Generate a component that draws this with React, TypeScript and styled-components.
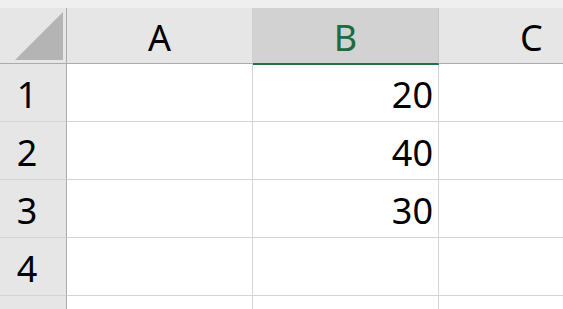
import React from 'react';
import styled, { createGlobalStyle } from 'styled-components';

const GlobalStyle = createGlobalStyle`
  html, body {
    margin: 0;
    padding: 0;
    background: #ffffff;
    overflow: hidden;
  }
  body {
    font-family: "Noto Sans", "Open Sans", sans-serif;
  }
`

const SSheet = styled.div`
  width: 563px;
  height: 309px;
  overflow: hidden;
  padding-top: 8px;
  box-sizing: border-box;
  background: #efefef;
`

const SGrid = styled.div`
  display: grid;
  grid-template-columns: 67px 186px 186px 186px;
  grid-template-rows: 56px repeat(5, 58px);
  background: #ffffff;
`

const SCorner = styled.div`
  background: #e6e6e6;
  border-right: 1px solid #ababab;
  border-bottom: 1px solid #ababab;
  display: flex;
  align-items: flex-end;
  justify-content: flex-end;
  padding: 0 3px 3px 0;
`

const SColHeader = styled.div`
  display: flex;
  align-items: center;
  justify-content: center;
  font-size: 36px;
  line-height: 1;
  padding-top: 4px;
  background: ${({ selected }) => selected ? '#d2d2d2' : '#e6e6e6'};
  color: ${({ selected }) => selected ? '#1e6b41' : '#000000'};
  border-right: 1px solid ${({ selected }) => selected ? '#c6c6c6' : '#d0d0d0'};
  border-bottom: 1px solid ${({ selected }) => selected ? '#217346' : '#ababab'};
  box-shadow: ${({ selected }) => selected ? '0 1px 0 #217346' : 'none'};
  z-index: ${({ selected }) => selected ? 1 : 0};
`

const SRowHeader = styled.div`
  display: flex;
  align-items: center;
  justify-content: center;
  padding: 4px 12px 0 0;
  font-size: 36px;
  line-height: 1;
  background: #e6e6e6;
  color: #000000;
  border-right: 1px solid #ababab;
  border-bottom: 1px solid #d4d4d4;
`

const SCell = styled.div`
  display: flex;
  align-items: center;
  justify-content: flex-end;
  padding: 4px 5px 0 0;
  font-size: 36px;
  line-height: 1;
  color: #000000;
  border-right: 1px solid #d4d4d4;
  border-bottom: 1px solid #d4d4d4;
`

const columns = ['A', 'B', 'C'];
// the fifth row is only a sliver at the bottom edge, its number stays out of view
const rows = [
  { n: '1', cells: ['', '20', ''] },
  { n: '2', cells: ['', '40', ''] },
  { n: '3', cells: ['', '30', ''] },
  { n: '4', cells: ['', '', ''] },
  { n: '', cells: ['', '', ''] },
];

const App = () => (
  <>
    <GlobalStyle />
    <SSheet>
      <SGrid>
        <SCorner>
          <svg width="48" height="48" viewBox="0 0 48 48">
            <polygon points="48,0 48,48 0,48" fill="#b4b4b4" />
          </svg>
        </SCorner>
        {columns.map((c) => (
          <SColHeader key={c} selected={c === 'B'}>{c}</SColHeader>
        ))}
        {rows.map((r, ri) => (
          <React.Fragment key={ri}>
            <SRowHeader>{r.n}</SRowHeader>
            {r.cells.map((v, i) => (
              <SCell key={i}>{v}</SCell>
            ))}
          </React.Fragment>
        ))}
      </SGrid>
    </SSheet>
  </>
);

export default App;
